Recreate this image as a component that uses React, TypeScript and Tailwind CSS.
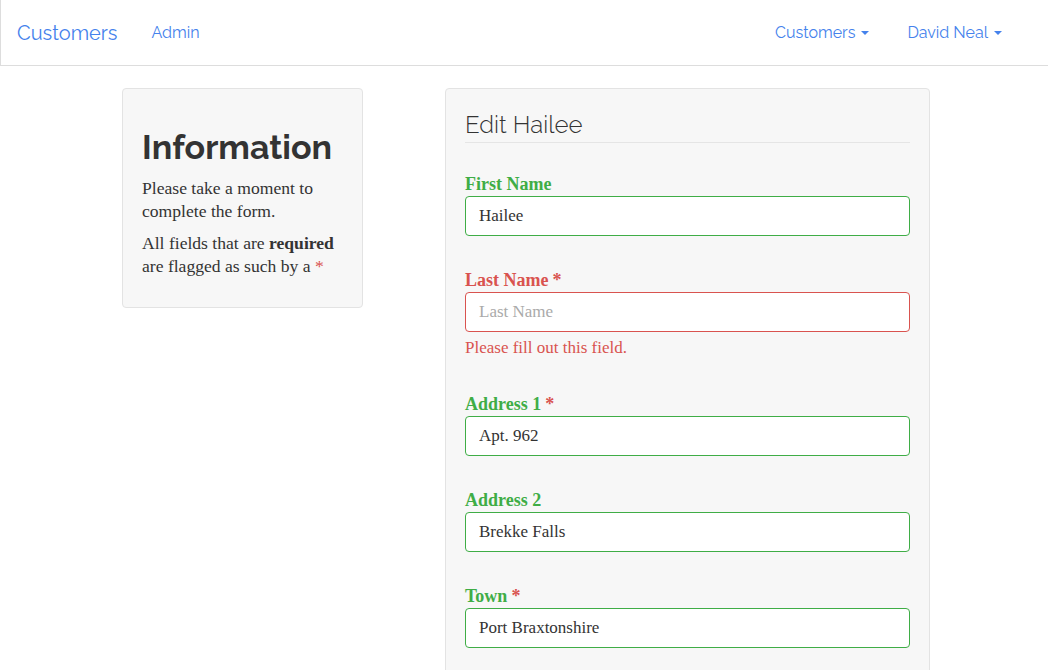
import React from "react";

const sans = { fontFamily: "Raleway, Lato, 'Open Sans', sans-serif" };
const serif = { fontFamily: "Georgia, 'Liberation Serif', serif" };

function Caret() {
  return (
    <span className="inline-block ml-[6px] align-middle w-0 h-0 border-t-[4px] border-t-[#4582ec] border-x-[4px] border-x-transparent" />
  );
}

type Field = {
  label: string;
  value: string;
  required?: boolean;
  error?: boolean;
};

const fields: Field[] = [
  { label: "First Name", value: "Hailee" },
  { label: "Last Name", value: "", required: true, error: true },
  { label: "Address 1", value: "Apt. 962", required: true },
  { label: "Address 2", value: "Brekke Falls" },
  { label: "Town", value: "Port Braxtonshire", required: true },
];

function FormGroup({ f }: { f: Field }) {
  const labelColor = f.error ? "text-[#d9534f]" : "text-[#3fad46]";
  const border = f.error ? "border-[#d9534f]" : "border-[#3fad46]";
  return (
    <div className="mb-[23px]">
      <label className={`block font-bold text-[18px] leading-[23px] pt-[10px] ${labelColor}`} style={serif}>
        {f.label}
        {f.required && <span className="text-[#d9534f] ml-[4px]">*</span>}
      </label>
      <input
        readOnly
        value={f.value}
        placeholder={f.label}
        className={`block w-full h-[40px] bg-white border ${border} rounded-[4px] px-[13px] text-[17px] text-[#333] placeholder:text-[#aaa] outline-none`}
        style={serif}
      />
      {f.error && (
        <div className="mt-[4px] pb-[1px] text-[17px] leading-[23px] text-[#d9534f]" style={serif}>
          Please fill out this field.
        </div>
      )}
    </div>
  );
}

export default function App() {
  return (
    <div className="h-[670px] overflow-hidden bg-white text-[#333]">
      <nav className="h-[66px] border-l border-b border-[#dddddd] flex items-center" style={sans}>
        <a className="ml-[16px] text-[20px] text-[#4582ec]">Customers</a>
        <a className="ml-[34px] text-[16px] text-[#4582ec]">Admin</a>
        <div className="flex-1" />
        <a className="text-[16px] text-[#4582ec] flex items-center">
          Customers
          <Caret />
        </a>
        <a className="ml-[38px] mr-[46px] text-[16px] text-[#4582ec] flex items-center">
          David Neal
          <Caret />
        </a>
      </nav>

      <div className="flex items-start ml-[122px] mt-[22px] gap-[82px]">
        <div className="w-[241px] bg-[#f7f7f7] border border-[#e3e3e3] rounded-[4px] px-[19px] pt-[38px] pb-[19px]">
          <h1 className="text-[34px] leading-[40px] font-bold text-[#333] mb-[10px]" style={sans}>
            Information
          </h1>
          <p className="text-[17.6px] leading-[23px] mb-[9px]" style={serif}>
            Please take a moment to complete the form.
          </p>
          <p className="text-[17.6px] leading-[23px] mb-[10px]" style={serif}>
            All fields that are <b>required</b> are flagged as such by a{" "}
            <span className="text-[#d9534f]">*</span>
          </p>
        </div>

        <div className="w-[485px] bg-[#f7f7f7] border border-[#e3e3e3] rounded-[4px] px-[19px] pt-[19px] pb-[19px]">
          <div className="text-[24px] leading-[34px] font-light text-[#333] border-b border-[#e5e5e5]" style={sans}>
            Edit Hailee
          </div>
          <div className="h-[20px]" />
          {fields.map((f) => (
            <FormGroup key={f.label} f={f} />
          ))}
        </div>
      </div>
    </div>
  );
}
